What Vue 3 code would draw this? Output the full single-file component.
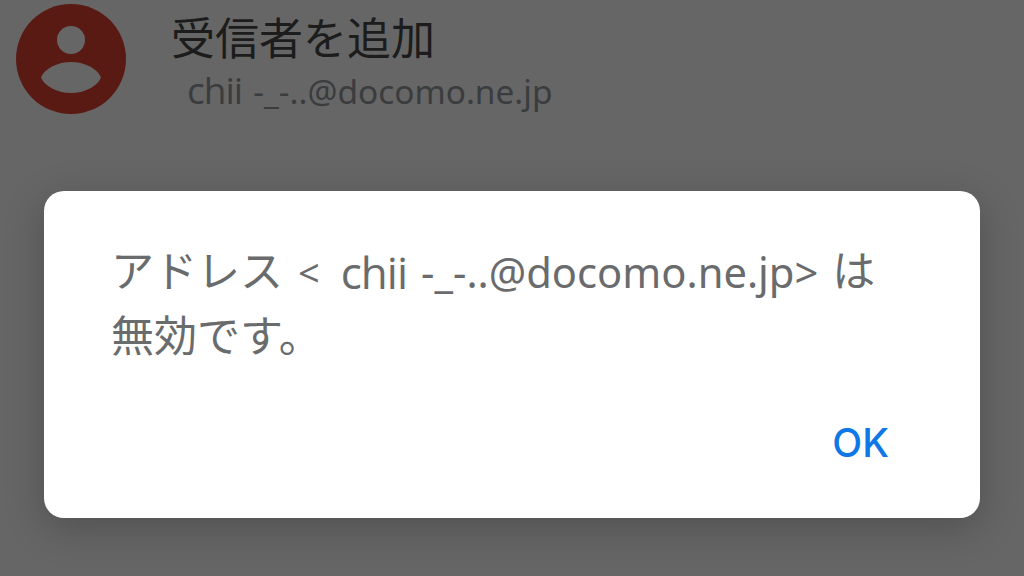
<script setup>
</script>

<template>
  <div class="screen">
    <header class="recipient">
      <svg class="avatar" viewBox="0 0 110 110" aria-hidden="true">
        <circle cx="55" cy="55" r="55" fill="#5a1a14" />
        <circle cx="55" cy="36" r="14" fill="#666666" />
        <path d="M25 73.5C29 64 42 58 55 58C68 58 81 64 85 73.5C81 83 68 89 55 89C42 89 29 83 25 73.5Z" fill="#666666" />
      </svg>
      <div class="info">
        <div class="title">受信者を追加</div>
        <div class="address"><span class="name">chii</span> <span class="mail">-_-..@docomo.ne.jp</span></div>
      </div>
    </header>
    <section class="dialog">
      <p class="message"><span class="jp">アドレス</span><span class="lt">&lt;</span><span class="big">chii</span><span class="mail-big">-_-..@docomo.ne.jp&gt;</span><span class="jp ha">は</span><br /><span class="jp">無効です。</span></p>
      <div class="actions">
        <button class="ok" type="button">OK</button>
      </div>
    </section>
  </div>
</template>

<style>
html, body { margin: 0; background: #666; }
</style>

<style scoped>
.screen {
  width: 1024px;
  height: 576px;
  overflow: hidden;
  background: #666666;
  display: flex;
  flex-direction: column;
  font-family: "Noto Sans", "Noto Sans CJK JP", sans-serif;
}
.recipient {
  height: 191px;
  box-sizing: border-box;
  padding: 4px 0 0 16px;
  display: flex;
  align-items: flex-start;
  gap: 46px;
}
.avatar { width: 110px; height: 110px; flex: none; }
.title {
  font-family: "Noto Sans CJK JP", sans-serif;
  font-size: 44px;
  line-height: 64px;
  color: #1c1c1c;
  margin-left: -1px;
}
.address {
  margin: 0 0 0 15px;
  line-height: 44px;
  color: #3a3c3e;
  white-space: nowrap;
}
.name { font-size: 37px; letter-spacing: -1px; font-family: "Open Sans", sans-serif; }
.mail { font-size: 33.4px; margin-left: 7px; }
.dialog {
  width: 936px;
  height: 327px;
  margin-left: 44px;
  box-sizing: border-box;
  background: #fff;
  border-radius: 20px;
  box-shadow: 0 10px 40px rgba(0, 0, 0, 0.22);
  padding: 49px 68px 0;
  display: flex;
  flex-direction: column;
}
.message {
  margin: 0;
  font-size: 38px;
  line-height: 65px;
  color: #696b6d;
  white-space: nowrap;
}
.message span { line-height: 1; }
.jp { font-family: "Noto Sans CJK JP", sans-serif; font-size: 43px; font-weight: 400; margin-left: -1px; }
.lt { margin-left: 15px; font-size: 38px; }
.big { font-size: 44px; letter-spacing: -1px; font-family: "Open Sans", sans-serif; margin-left: 21px; vertical-align: -2px; }
.mail-big { margin-left: 14px; font-size: 41.7px; vertical-align: -1px; }
.ha { margin-left: 14px; }
.actions { margin-top: auto; padding-bottom: 52px; display: flex; justify-content: flex-end; }
.ok {
  border: 0;
  background: none;
  padding: 0;
  margin-right: 23px;
  font-family: "Inter", "Roboto", sans-serif;
  font-size: 39px;
  font-weight: 500;
  line-height: 46px;
  color: #0f78e6;
}
</style>
